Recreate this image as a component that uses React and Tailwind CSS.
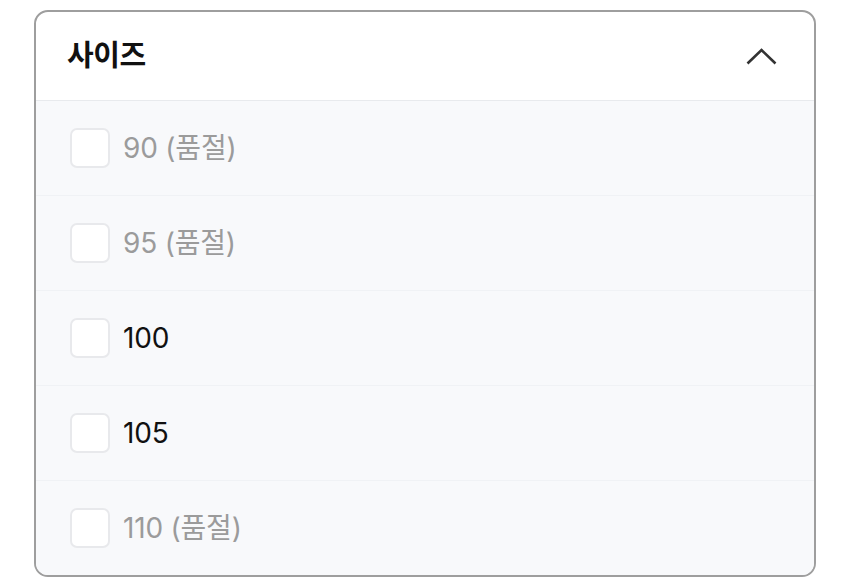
import React, { useState } from 'react';

const sizes = [
  { label: '90', soldOut: true },
  { label: '95', soldOut: true },
  { label: '100', soldOut: false },
  { label: '105', soldOut: false },
  { label: '110', soldOut: true },
];

const fontStack = { fontFamily: 'Inter, "Noto Sans CJK KR", sans-serif' };

const SizeRow = ({ item, checked, onToggle, last }) => (
  <label
    className={`flex flex-1 items-center gap-[13px] px-[34px] ${last ? '' : 'border-b border-[#f0f2f5]'} ${item.soldOut ? 'cursor-not-allowed' : 'cursor-pointer'}`}
  >
    <input
      type="checkbox"
      disabled={item.soldOut}
      checked={checked}
      onChange={onToggle}
      className="peer sr-only"
    />
    <span className="h-[40px] w-[40px] shrink-0 rounded-[7px] border-2 border-[#e8e9ec] bg-white peer-checked:border-[#111] peer-checked:bg-[#111]" />
    <span className={`text-[28px] tracking-[-0.2px] ${item.soldOut ? 'text-[#9b9b9b]' : 'text-[#111]'}`}>
      {item.label}
      {item.soldOut && ' (품절)'}
    </span>
  </label>
);

export default function App() {
  const [open, setOpen] = useState(true);
  const [selected, setSelected] = useState([]);

  const toggle = (label) =>
    setSelected((s) => (s.includes(label) ? s.filter((x) => x !== label) : [...s, label]));

  return (
    <div className="min-h-[584px] bg-white pl-[34px] pt-[10px]" style={fontStack}>
      <div className="flex h-[567px] w-[782px] flex-col overflow-hidden rounded-[14px] border-2 border-[#9e9e9e] bg-white">
        <button
          onClick={() => setOpen(!open)}
          className="flex h-[89px] shrink-0 items-center justify-between border-b border-[#e8eaed] pl-[31px] pr-[37px]"
        >
          <span className="text-[29px] font-bold tracking-[-0.4px] text-[#111]">사이즈</span>
          <svg width="31" height="17" viewBox="0 0 31 17" fill="none">
            <path d="M1.5 15.5 L15.5 2 L29.5 15.5" stroke="#333" strokeWidth="2.6" strokeLinecap="butt" strokeLinejoin="miter" />
          </svg>
        </button>
        {open && (
          <div className="flex flex-1 flex-col bg-[#f8f9fb]">
            {sizes.map((item, i) => (
              <SizeRow
                key={item.label}
                item={item}
                last={i === sizes.length - 1}
                checked={selected.includes(item.label)}
                onToggle={() => toggle(item.label)}
              />
            ))}
          </div>
        )}
      </div>
    </div>
  );
}
